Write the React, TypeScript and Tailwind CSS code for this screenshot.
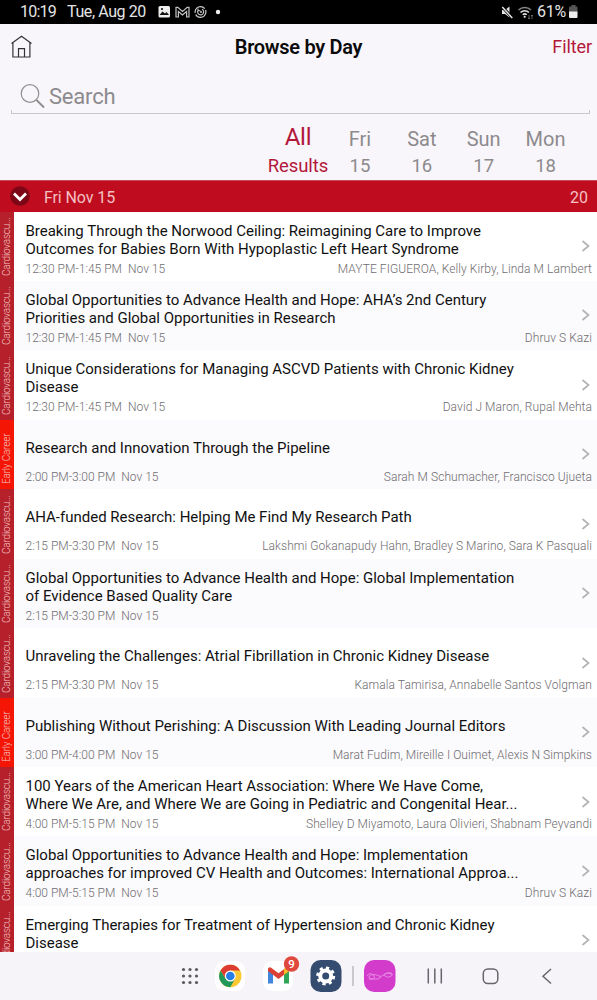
import React, { useState } from 'react';
import { clsx } from 'clsx';

type Track = 'Cardiovascu...' | 'Early Career';

interface Session {
  lines: string[];
  time?: string;
  speakers?: string;
  track: Track;
}

const DAYS = [
  { name: 'All', number: 'Results' },
  { name: 'Fri', number: '15' },
  { name: 'Sat', number: '16' },
  { name: 'Sun', number: '17' },
  { name: 'Mon', number: '18' },
];

const SESSIONS: Session[] = [
  {
    lines: ['Breaking Through the Norwood Ceiling: Reimagining Care to Improve', 'Outcomes for Babies Born With Hypoplastic Left Heart Syndrome'],
    time: '12:30 PM-1:45 PM',
    speakers: 'MAYTE FIGUEROA, Kelly Kirby, Linda M Lambert',
    track: 'Cardiovascu...',
  },
  {
    lines: ['Global Opportunities to Advance Health and Hope: AHA’s 2nd Century', 'Priorities and Global Opportunities in Research'],
    time: '12:30 PM-1:45 PM',
    speakers: 'Dhruv S Kazi',
    track: 'Cardiovascu...',
  },
  {
    lines: ['Unique Considerations for Managing ASCVD Patients with Chronic Kidney', 'Disease'],
    time: '12:30 PM-1:45 PM',
    speakers: 'David J Maron, Rupal Mehta',
    track: 'Cardiovascu...',
  },
  {
    lines: ['Research and Innovation Through the Pipeline'],
    time: '2:00 PM-3:00 PM',
    speakers: 'Sarah M Schumacher, Francisco Ujueta',
    track: 'Early Career',
  },
  {
    lines: ['AHA-funded Research: Helping Me Find My Research Path'],
    time: '2:15 PM-3:30 PM',
    speakers: 'Lakshmi Gokanapudy Hahn, Bradley S Marino, Sara K Pasquali',
    track: 'Cardiovascu...',
  },
  {
    lines: ['Global Opportunities to Advance Health and Hope: Global Implementation', 'of Evidence Based Quality Care'],
    time: '2:15 PM-3:30 PM',
    track: 'Cardiovascu...',
  },
  {
    lines: ['Unraveling the Challenges: Atrial Fibrillation in Chronic Kidney Disease'],
    time: '2:15 PM-3:30 PM',
    speakers: 'Kamala Tamirisa, Annabelle Santos Volgman',
    track: 'Cardiovascu...',
  },
  {
    lines: ['Publishing Without Perishing: A Discussion With Leading Journal Editors'],
    time: '3:00 PM-4:00 PM',
    speakers: 'Marat Fudim, Mireille I Ouimet, Alexis N Simpkins',
    track: 'Early Career',
  },
  {
    lines: ['100 Years of the American Heart Association: Where We Have Come,', 'Where We Are, and Where We are Going in Pediatric and Congenital Hear...'],
    time: '4:00 PM-5:15 PM',
    speakers: 'Shelley D Miyamoto, Laura Olivieri, Shabnam Peyvandi',
    track: 'Cardiovascu...',
  },
  {
    lines: ['Global Opportunities to Advance Health and Hope: Implementation', 'approaches for improved CV Health and Outcomes: International Approa...'],
    time: '4:00 PM-5:15 PM',
    speakers: 'Dhruv S Kazi',
    track: 'Cardiovascu...',
  },
  {
    lines: ['Emerging Therapies for Treatment of Hypertension and Chronic Kidney', 'Disease'],
    track: 'Cardiovascu...',
  },
];

function StatusBar() {
  return (
    <div className="flex h-6 shrink-0 items-center bg-black text-[16px] leading-6 text-[#e4e4e4]">
      <span className="ml-5 w-[47px] tracking-[-0.8px]">10:19</span>
      <span className="w-[91px] tracking-[-0.4px]">Tue, Aug 20</span>
      <svg width="64" height="14" viewBox="0 0 64 14" fill="none">
        <rect x="0.5" y="1" width="11.5" height="11.5" rx="1.5" fill="#eee" />
        <path d="M1.5 10 4.5 6.5 7 8.5 8.5 7 11 10Z" fill="#111" />
        <circle cx="4" cy="4" r="1.1" fill="#111" />
        <path d="M18 12V2.3H19.8L24.5 6.5 29.2 2.3H31V12H28.6V6.5L24.5 10 20.4 6.5V12Z" stroke="#c4c4c4" strokeWidth="1.2" />
        <circle cx="42.5" cy="7" r="5.4" stroke="#ccc" strokeWidth="1.2" strokeDasharray="14 1.5" />
        <path d="M40 5.5a3 3 0 1 0 4-1.3M40 3.5v2.3h2.4" stroke="#ccc" strokeWidth="1.1" />
        <circle cx="43" cy="7" r="1" fill="#ccc" />
        <circle cx="60" cy="7" r="2.2" fill="#eee" />
      </svg>
      <svg className="ml-auto" width="36" height="16" viewBox="0 0 36 16" fill="none">
        <path d="M1 6h3L8.5 2.5v11L4 10H1Z" fill="#e5e5e5" />
        <path d="m1 2.5 10 11" stroke="#000" strokeWidth="3" />
        <path d="m1.3 3 10 11" stroke="#e5e5e5" strokeWidth="1.5" />
        <path d="M17.5 6A9 9 0 0 1 30 6" stroke="#888" strokeWidth="1.5" />
        <path d="M19.5 8.500a6 6 0 0 1 8.500 0M21.700 10.800a3 3 0 0 1 4.100 0" stroke="#ddd" strokeWidth="1.5" />
        <circle cx="23.7" cy="12.8" r="1.1" fill="#ddd" />
        <path d="M28 11v4m-1-1 1 1 1-1M31 15v-4m-1 1 1-1 1 1" stroke="#777" strokeWidth="0.8" />
      </svg>
      <span className="w-[31px] tracking-[-0.3px]">61%</span>
      <svg className="mr-[18px]" width="11" height="16" viewBox="0 0 11 16">
        <path d="M3.5 1h4v1.5h1a1 1 0 0 1 1 1V8H1V3.5a1 1 0 0 1 1-1h1.500Z" fill="#555" />
        <path d="M1 7.500h8.500V13a1 1 0 0 1-1 1H2a1 1 0 0 1-1-1Z" fill="#eee" />
      </svg>
    </div>
  );
}

function NavBar() {
  return (
    <div className="grid h-[46px] shrink-0 grid-cols-3 items-center px-[5px]">
      <svg className="ml-[6px]" width="22" height="24" viewBox="0 0 22 24" fill="none" stroke="#333" strokeWidth="1.2">
        <path d="M0.5 8.500 10.500 1.300 20.500 8.500M1.900 7.600V22H18.900V7.600M7.500 22V13.700H13.500V22" />
      </svg>
      <h1 className="whitespace-nowrap text-center text-[20px] font-semibold leading-6 tracking-[-0.3px] text-[#0b0b0b]">Browse by Day</h1>
      <button type="button" className="text-right text-[18px] leading-6 tracking-[-0.1px] text-[#b3183a]">Filter</button>
    </div>
  );
}

function SearchField() {
  return (
    <div className="ml-[11px] mr-[7px] mt-[3px] flex h-[41px] shrink-0 flex-col justify-end">
      <div className="flex h-[30px] items-center pl-[9px] pt-[3px]">
        <svg width="26" height="26" viewBox="0 0 26 26" fill="none" stroke="#8f8f8f">
          <circle cx="10" cy="9.5" r="8.8" strokeWidth="1.2" />
          <path d="m16.500 16 7.500 7.500" strokeWidth="2" />
        </svg>
        <span className="ml-[3px] pt-px text-[22px] leading-7 tracking-[-0.2px] text-[#8c8a8d]">Search</span>
      </div>
      <div className="h-[4px] shrink-0 border-x border-b border-[#c9c7ca]" />
    </div>
  );
}

function DayTabs({ selected, onSelect }: { selected: string; onSelect: (day: string) => void }) {
  return (
    <div className="flex h-[66px] shrink-0 justify-end pr-[20.5px] pt-[7px]">
      {DAYS.map(({ name, number }) => (
        <button
          type="button"
          key={name}
          onClick={() => onSelect(name)}
          className={clsx(
            'flex w-[61.9px] flex-col items-center',
            name === selected ? 'text-[#b3183a]' : 'text-[#8c8a8d]',
          )}
        >
          <span className={clsx('flex h-[31px] items-center', name === selected ? 'text-[24px] tracking-[-0.3px]' : 'pt-[4px] text-[20px]')}>{name}</span>
          <span className="text-[18.5px] leading-[28px] tracking-[-0.1px]">{number}</span>
        </button>
      ))}
    </div>
  );
}

function SectionHeader() {
  return (
    <div className="flex h-[31.5px] shrink-0 items-center border-t border-[#c44a58] bg-[#bf0d1f] pl-[10px] pr-[9px] text-[16px] text-[#f3c0c4]">
      <svg width="20" height="20" viewBox="0 0 20 20" fill="none">
        <circle cx="10" cy="10" r="9.8" fill="#7d0717" />
        <path d="m4 7.500 6 6 6-6" stroke="#fff" strokeWidth="2.8" />
      </svg>
      <span className="ml-[14px] pt-[3px] tracking-[-0.1px]">Fri Nov 15</span>
      <span className="ml-auto pt-[3px]">20</span>
    </div>
  );
}

function SessionRow({ session, shaded }: { session: Session; shaded: boolean }) {
  const { lines, time, speakers, track } = session;

  return (
    <li className={clsx('flex h-[69.45px] shrink-0', shaded ? 'bg-[#fbfafc]' : 'bg-white')}>
      <div
        className={clsx(
          'flex w-[13.5px] items-end justify-center pb-[5px] text-[#f3c3c4]',
          track === 'Early Career' ? 'bg-[#f51505]' : 'bg-[#b5202a]',
        )}
      >
        <span className="h-[59px] rotate-180 whitespace-nowrap text-[10px] font-light leading-[12px] tracking-[-0.2px] [writing-mode:vertical-rl]">{track}</span>
      </div>
      <div className="flex min-w-0 flex-1 flex-col pl-3 pr-[5px] pt-[10px]">
        <div className="flex h-9 items-center justify-between">
          <p className="whitespace-nowrap text-[15px] leading-[18px] tracking-[-0.01px] text-[#111]">
            {lines.map((line) => (
              <span key={line} className="block">{line}</span>
            ))}
          </p>
          <svg className="mr-[1.5px] mt-[13px]" width="10" height="14" viewBox="0 0 10 14" fill="none" stroke="#b5b3b6" strokeWidth="1.7">
            <path d="m1.500 2 6 5-6 5" />
          </svg>
        </div>
        {time && (
          <div className="flex justify-between whitespace-nowrap pt-[3px] text-[12px] font-light leading-4 text-[#6f6d70]">
            <span>{time}<span className="ml-[6px]">Nov 15</span></span>
            <span className="tracking-[0.07px]">{speakers}</span>
          </div>
        )}
      </div>
    </li>
  );
}

function Taskbar() {
  return (
    <div className="h-12 shrink-0 bg-[#f6f4f9]">
      <svg width="597" height="48" viewBox="0 0 597 48" fill="none">
        <g fill="#5c5a5f">
          {[183.5, 190, 196.5].map((x) =>
            [17.5, 24, 30.5].map((y) => <circle key={`${x}-${y}`} cx={x} cy={y} r="1.6" />),
          )}
        </g>

        <rect x="215" y="9" width="30" height="30" rx="9" fill="#fff" />
        <circle cx="230.3" cy="24" r="11.2" fill="#fcc934" />
        <path d="M220.600 18.400a11.200 11.200 0 0 0 9.700 16.800L235 26.700l-9.500-.2Z" fill="#21995b" />
        <path d="M220.600 18.400a11.200 11.200 0 0 1 19.400 0H230.300L225.500 26.500Z" fill="#dc3d30" />
        <circle cx="230.3" cy="24" r="5.5" fill="#fff" />
        <circle cx="230.3" cy="24" r="4.3" fill="#287ce5" />

        <rect x="263" y="9" width="30" height="30" rx="9" fill="#fff" />
        <path d="M268 17v14.500h5V21Z" fill="#4285dc" />
        <path d="M289 17v14.500h-5V21Z" fill="#30a557" />
        <path d="M268 19v-1.500c0-2 2-2.800 3.500-1.600l7 5.300 7-5.300c1.500-1.200 3.500-.4 3.500 1.600V19l-10.500 8Z" fill="#dc3f33" />
        <path d="M284 17v6l5-3.800v-2c0-2-2-2.800-3.500-1.600Z" fill="#f5bb22" />
        <circle cx="291.5" cy="12" r="7.7" fill="#df493d" />
        <text x="291.5" y="16" textAnchor="middle" fontSize="11.5" fontWeight="500" fill="#fff">9</text>

        <rect x="310.5" y="8" width="31" height="32" rx="10" fill="#344c70" />
        <circle cx="325.7" cy="24" r="8" stroke="#fff" strokeWidth="3" strokeDasharray="3.14 3.143" />
        <circle cx="325.7" cy="24" r="5.5" stroke="#fff" strokeWidth="4" />

        <path d="M353 14v20" stroke="#bbb9be" strokeWidth="1.5" />

        <rect x="364" y="8" width="31.5" height="32" rx="10" fill="#d33ccb" />
        <path d="M367 24c2-3 5-3 7 0s-5 4-5 1 7-3 10-1 8-5 12-3-3 6-6 3 4-4 8-1M369 27h9l3-2" stroke="#eb92e7" strokeWidth="0.9" />

        <g stroke="#68666c" strokeWidth="1.5">
          <path d="M428.300 16.500v15M434.800 16.500v15M441.300 16.500v15" />
          <rect x="483.3" y="17" width="14.5" height="14.5" rx="4.5" />
          <path d="m551 17-8 7.200 8 7.300" />
        </g>
      </svg>
    </div>
  );
}

export default function App() {
  const [selectedDay, setSelectedDay] = useState('All');

  return (
    <div className="flex h-[1000px] w-[597px] flex-col overflow-hidden bg-[#f8f6fa] font-['Roboto',sans-serif]">
      <StatusBar />
      <NavBar />
      <SearchField />
      <DayTabs selected={selectedDay} onSelect={setSelectedDay} />
      <SectionHeader />
      <ul className="flex min-h-0 flex-1 flex-col overflow-hidden">
        {SESSIONS.map((session, index) => (
          <SessionRow key={session.lines.join(' ')} session={session} shaded={index % 2 === 1} />
        ))}
      </ul>
      <Taskbar />
    </div>
  );
}
